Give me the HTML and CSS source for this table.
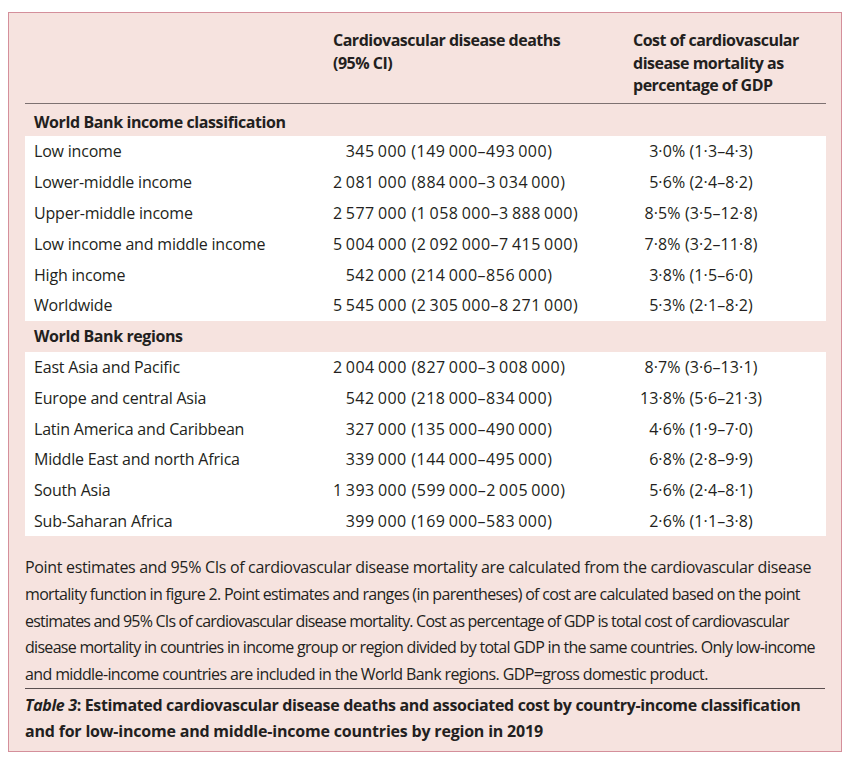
FILE: index.html
```html
<!DOCTYPE html>
<html lang="en">
<head>
<meta charset="utf-8">
<title>Table 3</title>
<link rel="stylesheet" href="styles.css">
</head>
<body>
<div class="card">
  <table class="data">
    <colgroup>
      <col class="c1">
      <col class="c2">
      <col class="c3">
    </colgroup>
    <thead>
      <tr>
        <th></th>
        <th class="h2">Cardiovascular disease deaths<br>(95% CI)</th>
        <th class="h3">Cost of cardiovascular<br>disease mortality as<br>percentage of GDP</th>
      </tr>
    </thead>
    <tbody>
      <tr class="section first"><td colspan="3">World Bank income classification</td></tr>
      <tr class="row"><td>Low income</td><td class="num">345&#8201;000 (149&#8201;000–493&#8201;000)</td><td class="pct">3·0% (1·3–4·3)</td></tr>
      <tr class="row"><td>Lower-middle income</td><td class="num">2&#8201;081&#8201;000 (884&#8201;000–3&#8201;034&#8201;000)</td><td class="pct">5·6% (2·4–8·2)</td></tr>
      <tr class="row"><td>Upper-middle income</td><td class="num">2&#8201;577&#8201;000 (1&#8201;058&#8201;000–3&#8201;888&#8201;000)</td><td class="pct">8·5% (3·5–12·8)</td></tr>
      <tr class="row"><td>Low income and middle income</td><td class="num">5&#8201;004&#8201;000 (2&#8201;092&#8201;000–7&#8201;415&#8201;000)</td><td class="pct">7·8% (3·2–11·8)</td></tr>
      <tr class="row"><td>High income</td><td class="num">542&#8201;000 (214&#8201;000–856&#8201;000)</td><td class="pct">3·8% (1·5–6·0)</td></tr>
      <tr class="row"><td>Worldwide</td><td class="num">5&#8201;545&#8201;000 (2&#8201;305&#8201;000–8&#8201;271&#8201;000)</td><td class="pct">5·3% (2·1–8·2)</td></tr>
      <tr class="section"><td colspan="3">World Bank regions</td></tr>
      <tr class="row"><td>East Asia and Pacific</td><td class="num">2&#8201;004&#8201;000 (827&#8201;000–3&#8201;008&#8201;000)</td><td class="pct">8·7% (3·6–13·1)</td></tr>
      <tr class="row"><td>Europe and central Asia</td><td class="num">542&#8201;000 (218&#8201;000–834&#8201;000)</td><td class="pct">13·8% (5·6–21·3)</td></tr>
      <tr class="row"><td>Latin America and Caribbean</td><td class="num">327&#8201;000 (135&#8201;000–490&#8201;000)</td><td class="pct">4·6% (1·9–7·0)</td></tr>
      <tr class="row"><td>Middle East and north Africa</td><td class="num">339&#8201;000 (144&#8201;000–495&#8201;000)</td><td class="pct">6·8% (2·8–9·9)</td></tr>
      <tr class="row"><td>South Asia</td><td class="num">1&#8201;393&#8201;000 (599&#8201;000–2&#8201;005&#8201;000)</td><td class="pct">5·6% (2·4–8·1)</td></tr>
      <tr class="row"><td>Sub-Saharan Africa</td><td class="num">399&#8201;000 (169&#8201;000–583&#8201;000)</td><td class="pct">2·6% (1·1–3·8)</td></tr>
    </tbody>
  </table>
  <p class="note"><span class="ln l1">Point estimates and 95% CIs of cardiovascular disease mortality are calculated from the cardiovascular disease</span>
<span class="ln l2">mortality function in figure 2. Point estimates and ranges (in parentheses) of cost are calculated based on the point</span>
<span class="ln l3">estimates and 95% CIs of cardiovascular disease mortality. Cost as percentage of GDP is total cost of cardiovascular</span>
<span class="ln l4">disease mortality in countries in income group or region divided by total GDP in the same countries. Only low-income</span>
<span class="ln l5">and middle-income countries are included in the World Bank regions. GDP=gross domestic product.</span></p>
  <p class="caption"><span class="ln"><em>Table 3</em>: Estimated cardiovascular disease deaths and associated cost by country-income classification</span>
<span class="ln c2l">and for low-income and middle-income countries by region in 2019</span></p>
</div>
</body>
</html>
```

FILE: styles.css
```css
* { box-sizing: border-box; }
html, body { margin: 0; padding: 0; background: #ffffff; }
body {
  font-family: "Open Sans", "Noto Sans", sans-serif;
  color: #231f20;
}
.card {
  margin: 12px 0 0 8px;
  width: 834px;
  height: 740px;
  border: 1px solid #d48f9b;
  background: #f6e3df;
  padding: 0 16px;
}
.data {
  width: 801px;
  border-collapse: collapse;
  table-layout: fixed;
  font-size: 16px;
}
.c1 { width: 298px; }
.c2 { width: 300px; }
.c3 { width: 203px; }
.data th {
  text-align: left;
  vertical-align: top;
  font-weight: 700;
  line-height: 22.5px;
  padding: 16px 0 6px 10px;
  border-bottom: 1px solid #7d7171;
  letter-spacing: -0.5px;
}
.data th:first-child { padding-left: 9px; }
.section td {
  font-weight: 700;
  height: 30.8px;
  padding: 0 0 0 9px;
  vertical-align: middle;
  letter-spacing: -0.4px;
}
.section.first td { height: 33px; padding-top: 4px; }
.row td {
  background: #ffffff;
  height: 30.8px;
  padding: 0 0 0 9px;
  vertical-align: middle;
  white-space: nowrap;
  letter-spacing: -0.2px;
}
.row td.num { text-align: center; padding: 0 58px 0 10px; letter-spacing: 0.5px; }
.row td.pct { text-align: center; padding: 0 57px 0 10px; letter-spacing: 0.1px; }
.note {
  margin: 18px 0 0 0;
  font-size: 16px;
  line-height: 26.7px;
  white-space: nowrap;
  padding-bottom: 0;
  border-bottom: 1px solid #5a4f50;
}
.ln { display: block; }
.l1 { letter-spacing: -0.33px; }
.l2 { letter-spacing: -0.68px; }
.l3 { letter-spacing: -0.8px; }
.l4 { letter-spacing: -0.7px; }
.l5 { letter-spacing: -0.62px; }
.caption {
  margin: 3px 0 0 0;
  font-size: 16px;
  font-weight: 700;
  line-height: 26px;
  letter-spacing: -0.35px;
  white-space: nowrap;
}
.caption .c2l { letter-spacing: -0.2px; }
.caption em { font-style: italic; }
```
